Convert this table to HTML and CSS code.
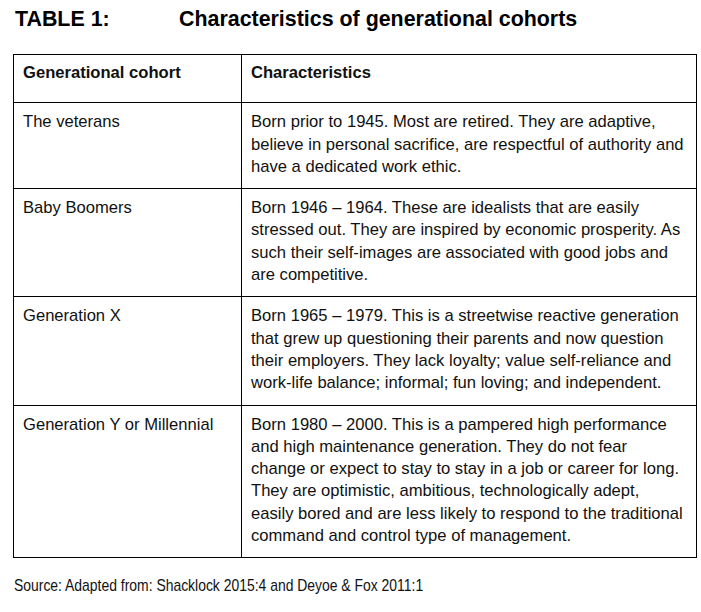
FILE: index.html
```html
<!DOCTYPE html>
<html lang="en">
<head>
<meta charset="utf-8">
<title>Table 1: Characteristics of generational cohorts</title>
<link rel="stylesheet" href="styles.css">
</head>
<body>
<h1 class="caption"><span class="caption-label">TABLE 1:</span><span class="caption-title">Characteristics of generational cohorts</span></h1>
<table class="cohorts">
  <colgroup>
    <col class="col-cohort">
    <col class="col-chars">
  </colgroup>
  <thead>
    <tr>
      <th>Generational cohort</th>
      <th>Characteristics</th>
    </tr>
  </thead>
  <tbody>
    <tr>
      <td>The veterans</td>
      <td>Born prior to 1945. Most are retired. They are adaptive,<br>believe in personal sacrifice, are respectful of authority and<br>have a dedicated work ethic.</td>
    </tr>
    <tr>
      <td>Baby Boomers</td>
      <td>Born 1946 – 1964. These are idealists that are easily<br>stressed out. They are inspired by economic prosperity. As<br>such their self-images are associated with good jobs and<br>are competitive.</td>
    </tr>
    <tr>
      <td>Generation X</td>
      <td>Born 1965 – 1979. This is a streetwise reactive generation<br>that grew up questioning their parents and now question<br>their employers. They lack loyalty; value self-reliance and<br>work-life balance; informal; fun loving; and independent.</td>
    </tr>
    <tr>
      <td>Generation Y or Millennial</td>
      <td>Born 1980 – 2000. This is a pampered high performance<br>and high maintenance generation. They do not fear<br>change or expect to stay to stay in a job or career for long.<br>They are optimistic, ambitious, technologically adept,<br>easily bored and are less likely to respond to the traditional<br>command and control type of management.</td>
    </tr>
  </tbody>
</table>
<p class="source">Source: Adapted from: Shacklock 2015:4 and Deyoe &amp; Fox 2011:1</p>
</body>
</html>
```
FILE: styles.css
```css
html, body {
  margin: 0;
  padding: 0;
  background: #ffffff;
}

body {
  font-family: "Liberation Sans", Arial, sans-serif;
  color: #111111;
}

.caption {
  display: flex;
  margin: 0;
  padding: 7px 0 0 15px;
  font-size: 21.4px;
  line-height: 24px;
  font-weight: bold;
  color: #000000;
}

.caption-label {
  width: 164px;
  flex: none;
}

.cohorts {
  margin: 23px 0 0 13px;
  width: 684px;
  border-collapse: collapse;
  table-layout: fixed;
  font-size: 16.6px;
  line-height: 22.3px;
}

.col-cohort {
  width: 228px;
}

.cohorts th,
.cohorts td {
  border: 1px solid #000000;
  text-align: left;
  vertical-align: top;
  padding: 8px 7px 10px 9px;
  white-space: nowrap;
}

.cohorts th {
  font-weight: bold;
  padding-top: 7px;
  padding-bottom: 18px;
}

.source {
  margin: 17px 0 0 14px;
  font-size: 16.2px;
  line-height: 20px;
  color: #111111;
  white-space: nowrap;
  transform: scaleX(0.86);
  transform-origin: left center;
}
```
